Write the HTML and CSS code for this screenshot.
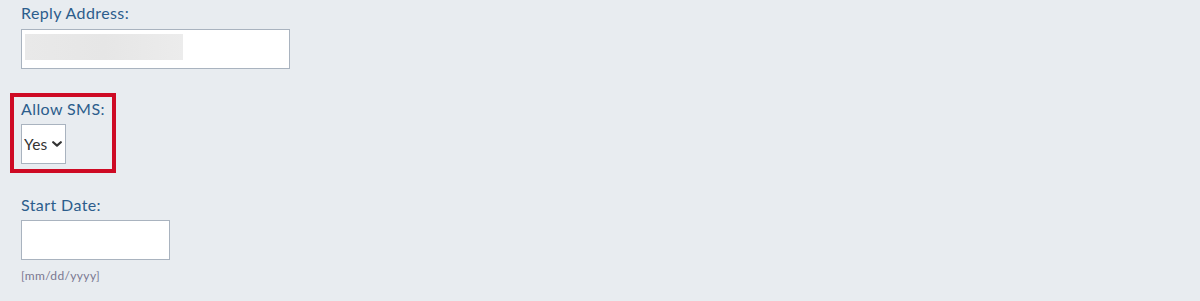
FILE: index.html
```html
<!DOCTYPE html>
<html lang="en">
<head>
<meta charset="utf-8">
<title>Form</title>
<link rel="stylesheet" href="styles.css">
</head>
<body>
<form class="form">
  <div class="field field-reply">
    <label class="label" for="reply">Reply Address:</label>
    <div class="input input-wide" id="reply"><span class="redacted"></span></div>
  </div>

  <div class="field field-sms highlight">
    <label class="label" for="sms">Allow SMS:</label>
    <span class="select-wrap">
      <select class="select" id="sms"><option>Yes</option><option>No</option></select>
      <svg class="chevron" width="10" height="6" viewBox="0 0 10 6" aria-hidden="true"><path d="M1.2 1.2 L5 4.6 L8.8 1.2" fill="none" stroke="#333" stroke-width="2.2" stroke-linecap="round" stroke-linejoin="round"/></svg>
    </span>
  </div>

  <div class="field field-date">
    <label class="label" for="start">Start Date:</label>
    <input class="input input-date" id="start" type="text">
    <div class="hint">[mm/dd/yyyy]</div>
  </div>
</form>
</body>
</html>
```

FILE: styles.css
```css
html, body {
  margin: 0;
  padding: 0;
  background: #e8ecf0;
}
body {
  font-family: "Lato", "Open Sans", sans-serif;
  color: #2c5d8c;
  height: 301px;
  overflow: hidden;
}
.form {
  display: flex;
  flex-direction: column;
  align-items: flex-start;
  padding: 3px 0 0 21px;
}
.field {
  display: flex;
  flex-direction: column;
  align-items: flex-start;
}
.label {
  font-size: 16px;
  line-height: 20px;
  letter-spacing: 0.4px;
  color: #2c5d8c;
}
.input {
  box-sizing: border-box;
  height: 40px;
  background: #fff;
  border: 1px solid #a9b3bf;
  margin-top: 6px;
}
.input-wide {
  width: 269px;
  padding: 4px 3px;
}
.redacted {
  display: block;
  width: 158px;
  height: 26px;
  background: linear-gradient(90deg, #e9e9e9 0%, #e6e6e6 50%, #ececec 100%);
}
.highlight {
  margin: 24px 0 0 -11px;
  box-sizing: border-box;
  width: 106px;
  border: 4px solid #ce0a24;
  padding: 2px 7px 5px 7px;
}
.select-wrap {
  position: relative;
  display: inline-block;
  margin-top: 5px;
}
.select {
  appearance: none;
  -webkit-appearance: none;
  box-sizing: border-box;
  width: 45px;
  height: 40px;
  border: 1px solid #a9b3bf;
  border-radius: 0;
  background: #fff;
  font-family: "Lato", "Open Sans", sans-serif;
  font-size: 15.5px;
  letter-spacing: 0.2px;
  color: #333;
  padding: 0 0 0 2px;
  margin: 0;
  display: block;
}
.chevron {
  position: absolute;
  left: 31px;
  top: 17px;
  pointer-events: none;
}
.field-date {
  margin-top: 22px;
}
.input-date {
  width: 149px;
  font-family: inherit;
  font-size: 15px;
  padding: 0 4px;
  margin: 5px 0 0 0;
  outline: none;
}
.hint {
  margin-top: 8px;
  font-size: 12px;
  line-height: 16px;
  letter-spacing: 0.35px;
  color: #7a7890;
}
```
